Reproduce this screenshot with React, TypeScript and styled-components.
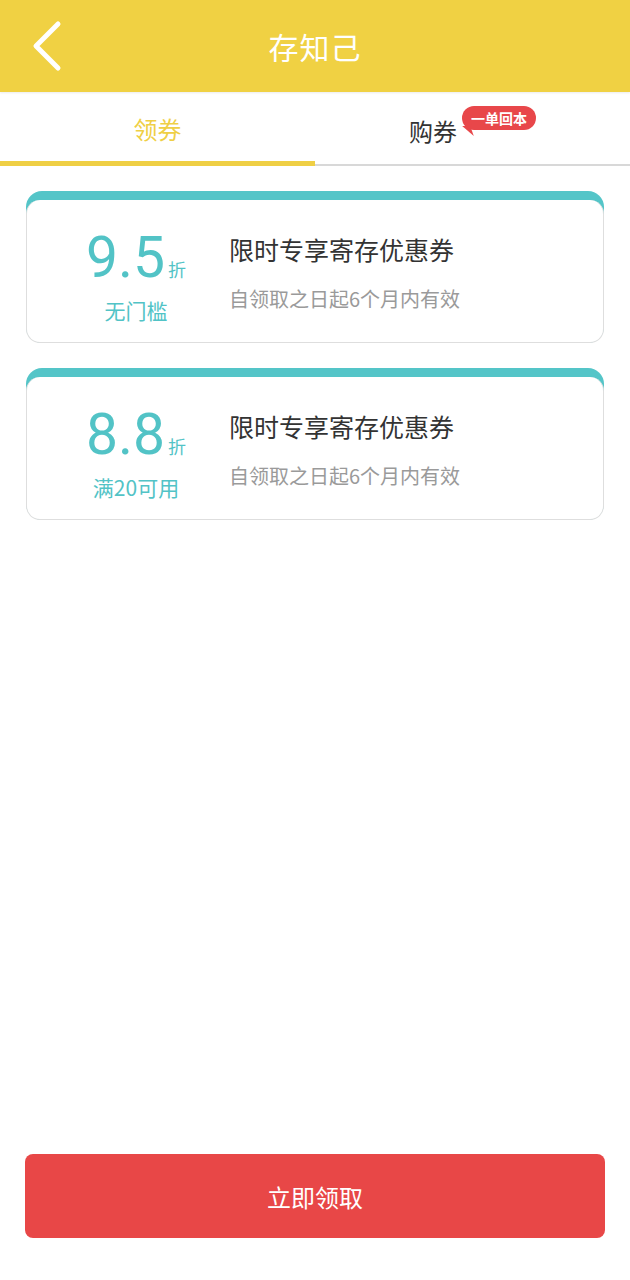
import { FC } from "react";
import styled, { createGlobalStyle } from "styled-components";

const GlobalStyle = createGlobalStyle`
	html, body {
		margin:0;
		padding:0;
		background:#fff;
	}
	body {
		font-family:"Noto Sans CJK SC", "Noto Sans", sans-serif;
	}
`;

const coupons = [
	{ rate: "9.5", cond: "无门槛" },
	{ rate: "8.8", cond: "满20可用" },
];

const App:FC = () => {
	return (
		<Page>
			<GlobalStyle />
			<Header>
				<BackButton aria-label="back">
					<svg width="34" height="52" viewBox="0 0 34 52">
						<path d="M28 4 L6 26 L28 48" fill="none" stroke="#fff" strokeWidth="5" strokeLinecap="round" strokeLinejoin="round" />
					</svg>
				</BackButton>
				<Title>存知己</Title>
			</Header>

			<Tabs>
				<Tab active>领券</Tab>
				<Tab>
					购券
					<Badge>一单回本</Badge>
				</Tab>
			</Tabs>

			<List>
				{coupons.map((c) => (
					<Coupon key={c.rate} rate={c.rate} cond={c.cond} />
				))}
			</List>

			<Footer>
				<SubmitButton>立即领取</SubmitButton>
			</Footer>
		</Page>
	);
};

const Coupon:FC<{
	rate:string;
	cond:string;
}> = (props) => {
	return (
		<CouponCard>
			<CouponBody>
				<RateCol>
					<Rate>
						<RateNum>{ props.rate }</RateNum>
						<RateUnit>折</RateUnit>
					</Rate>
					<Cond>{ props.cond }</Cond>
				</RateCol>
				<InfoCol>
					<CouponTitle>限时专享寄存优惠券</CouponTitle>
					<CouponDesc>自领取之日起6个月内有效</CouponDesc>
				</InfoCol>
			</CouponBody>
		</CouponCard>
	);
};

export default App;


const Page = styled.div`
	min-height:100vh;
	display:flex;
	flex-direction:column;
`;

const Header = styled.div`
	position:relative;
	height:92px;
	background:#f0d143;
	display:flex;
	align-items:center;
	justify-content:center;
	box-shadow:0 1px 2px rgba(0,0,0,0.08);
`;

const BackButton = styled.button`
	all:unset;
	position:absolute;
	left:30px;
	top:20px;
	display:flex;
`;

const Title = styled.h1`
	margin:0;
	color:#fff;
	font-size:30px;
	font-weight:400;
	letter-spacing:1px;
`;

const Tabs = styled.div`
	display:flex;
	height:72px;
	border-bottom:2px solid #d8d8d8;
`;

const Tab = styled.div<{ active?:boolean }>`
	flex:1;
	display:flex;
	align-items:center;
	justify-content:center;
	padding-top:4px;
	font-size:24px;
	color:${(p) => p.active ? "#efcf45" : "#333"};
	border-bottom:${(p) => p.active ? "5px solid #efcf45" : "none"};
	margin-bottom:${(p) => p.active ? "-2px" : "0"};
	box-sizing:border-box;
`;

const Badge = styled.span`
	position:relative;
	align-self:flex-start;
	margin-top:10px;
	margin-left:5px;
	white-space:nowrap;
	background:#e8474a;
	color:#fff;
	font-size:14px;
	font-weight:700;
	line-height:24px;
	padding:0 9px;
	border-radius:12px;

	&::before {
		content:"";
		position:absolute;
		left:2px;
		bottom:-6px;
		border-top:10px solid #e8474a;
		border-left:8px solid transparent;
		transform:skewX(20deg);
	}
`;

const List = styled.div`
	flex:1;
	display:flex;
	flex-direction:column;
	gap:25px;
	padding:25px 26px;
`;

const CouponCard = styled.div`
	background:#54c5c8;
	border-radius:16px;
	padding-top:9px;
	box-sizing:border-box;
`;

const CouponBody = styled.div`
	display:flex;
	align-items:center;
	height:143px;
	background:#fff;
	border:1px solid #dedede;
	border-top:none;
	border-radius:14px;
	box-sizing:border-box;
	padding-bottom:6px;
`;

const RateCol = styled.div`
	width:182px;
	margin-left:18px;
	margin-top:18px;
	display:flex;
	flex-direction:column;
	align-items:center;
	color:#52c3c6;
`;

const Rate = styled.div`
	display:flex;
	align-items:baseline;
	line-height:1;
`;

const RateNum = styled.span`
	font-family:Roboto, "Noto Sans", sans-serif;
	font-size:57px;
	font-weight:400;
`;

const RateUnit = styled.span`
	font-size:18px;
	margin-left:3px;
`;

const Cond = styled.div`
	margin-top:9px;
	font-size:21px;
	line-height:30px;
`;

const InfoCol = styled.div`
	margin-left:2px;
	display:flex;
	flex-direction:column;
	gap:18px;
	margin-top:8px;
`;

const CouponTitle = styled.div`
	font-size:25px;
	color:#333;
	line-height:36px;
`;

const CouponDesc = styled.div`
	font-size:20px;
	color:#9a9a9a;
	line-height:28px;
`;

const Footer = styled.div`
	padding:0 25px 42px;
`;

const SubmitButton = styled.button`
	all:unset;
	box-sizing:border-box;
	display:flex;
	align-items:center;
	justify-content:center;
	width:100%;
	height:84px;
	border-radius:8px;
	background:#e84747;
	color:#fff;
	font-size:24px;
	cursor:pointer;
`;
